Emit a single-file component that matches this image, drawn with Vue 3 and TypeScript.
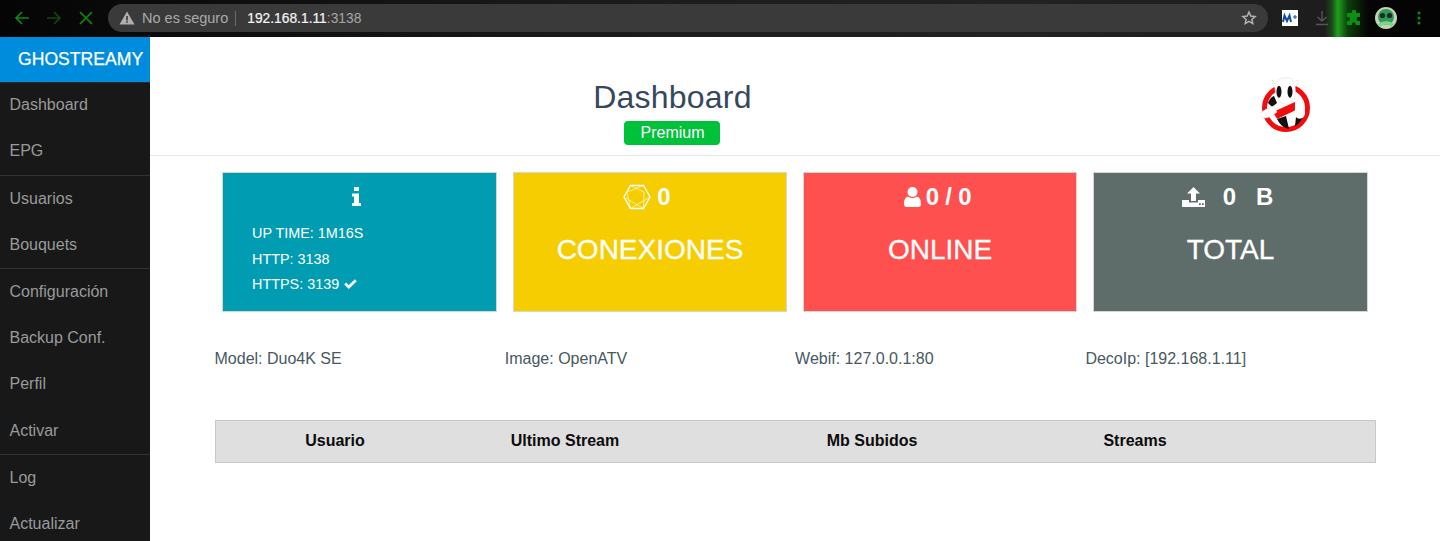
<script setup lang="ts">
const navGroups: string[][] = [
  ['Dashboard', 'EPG'],
  ['Usuarios', 'Bouquets'],
  ['Configuración', 'Backup Conf.', 'Perfil', 'Activar'],
  ['Log', 'Actualizar'],
]
const info: string[] = ['Model: Duo4K SE', 'Image: OpenATV', 'Webif: 127.0.0.1:80', 'DecoIp: [192.168.1.11]']
</script>

<template>
  <div class="page">
    <header class="chrome">
      <div class="nav-icons">
        <svg width="18" height="18" viewBox="0 0 18 18" class="ic-green"><path d="M16 9H3M9 3 3 9l6 6" fill="none" stroke="currentColor" stroke-width="1.7"/></svg>
        <svg width="18" height="18" viewBox="0 0 18 18" class="ic-dim"><path d="M2 9h13M9 3l6 6-6 6" fill="none" stroke="currentColor" stroke-width="1.7"/></svg>
        <svg width="18" height="18" viewBox="0 0 18 18" class="ic-green"><path d="M3 3l12 12M15 3 3 15" fill="none" stroke="currentColor" stroke-width="1.7"/></svg>
      </div>
      <div class="omnibox">
        <svg width="16" height="14" viewBox="0 0 16 14" class="warn"><path d="M8 0.5 15.5 13.5H.5Z" fill="#b0b0b0"/><path d="M7.2 5h1.6v4.4H7.2zM7.2 10.2h1.6v1.6H7.2z" fill="#3a3a3a"/></svg>
        <span class="insecure">No es seguro</span>
        <span class="sep"></span>
        <span class="url"><b>192.168.1.11</b><i>:3138</i></span>
        <svg class="star" width="16" height="16" viewBox="0 0 24 24"><path d="M12 3.2l2.7 5.9 6.4.7-4.8 4.3 1.4 6.3-5.7-3.3-5.7 3.3 1.4-6.3-4.8-4.3 6.4-.7z" fill="none" stroke="#b4b4b4" stroke-width="2.2"/></svg>
      </div>
      <div class="ext">
        <div class="movistar"><svg width="16" height="10" viewBox="0 0 16 10"><path d="M1 9 2.5 2.5 5 8 7.5 2.5 9 9" fill="none" stroke="#0b4f9e" stroke-width="2"/><path d="M11 4h4M13 2v4" stroke="#0b4f9e" stroke-width="1"/></svg></div>
        <svg class="dl" width="16" height="16" viewBox="0 0 16 16"><path d="M8 1v10M3.5 7 8 11l4.500-4M2 14.500h12" fill="none" stroke="#555" stroke-width="1.4"/></svg>
        <svg class="puzzle" width="16" height="16" viewBox="0 0 16 16"><path d="M6 1.500a2 2 0 0 1 4 0V3h4v4h-1.500a2 2 0 0 0 0 4H14v4H9.500v-1a1.800 1.800 0 0 0-3.600 0v1H1v-4h1a2 2 0 0 0 0-4H1V3h5z" fill="#0c8f12"/></svg>
        <svg class="avatar" width="22" height="22" viewBox="0 0 22 22"><circle cx="11" cy="11" r="11" fill="#c9d0b8"/><circle cx="11" cy="10" r="8" fill="#2f9a57"/><circle cx="7.500" cy="8.500" r="2.600" fill="#1c2a20"/><circle cx="14.500" cy="8.500" r="2.600" fill="#1c2a20"/><path d="M4 19c3-4 11-4 14 0" stroke="#7bd685" stroke-width="3.500" fill="none"/></svg>
        <svg class="dots" width="4" height="14" viewBox="0 0 4 14"><circle cx="2" cy="2" r="1.500" fill="#0b8f10"/><circle cx="2" cy="7" r="1.500" fill="#0b8f10"/><circle cx="2" cy="12" r="1.500" fill="#0b8f10"/></svg>
      </div>
    </header>

    <div class="body">
      <aside class="sidebar">
        <div class="brand">GHOSTREAMY</div>
        <nav v-for="(group, g) in navGroups" :key="g" class="group">
          <a v-for="item in group" :key="item" class="nav-item">{{ item }}</a>
        </nav>
      </aside>

      <main class="main">
        <section class="head">
          <div class="head-title">
            <h1>Dashboard</h1>
            <span class="badge">Premium</span>
          </div>
          <div class="head-logo">
            <svg width="52" height="58" viewBox="0 0 52 58">
              <circle cx="26" cy="33" r="21.500" fill="#fff" stroke="#f10d0d" stroke-width="5"/>
              <path d="M8 28c1-3 3-6 6-7l3 7-5 4zM17 44l9-3 3 13c-5-1-9-4-12-10zM36 42l7-1c-1 4-4 8-8 10z" fill="#111"/>
              <path d="M12 5c1 1 2 3 3 4 2-4 8-7 13-6 3 0 5 2 6 4 1-1 3-2 4-2 0 3-1 5-3 7 1 6 0 12-2 15-3 3-9 3-12 0-4-4-6-9-6-14-2-2-3-5-3-8z" fill="#fff" stroke="#dcdcdc" stroke-width=".6"/>
              <ellipse cx="19" cy="16.700" rx="2.500" ry="6" fill="#111"/>
              <ellipse cx="30" cy="16.700" rx="2.500" ry="6" fill="#111"/>
              <path d="M13 37l22-10 1 8-19 9z" fill="#f10d0d"/>
              <path d="M35 25c6 3 10 8 10 13 0 4-4 7-8 5-3-2-2-8-2-11z" fill="#fff"/>
              <path d="M0 38c5-3 9-6 14-7l3 6c-4 3-8 6-12 6-4 0-6-3-5-5z" fill="#fff" stroke="#ddd" stroke-width=".6"/>
            </svg>
          </div>
        </section>

        <section class="cards">
          <article class="card teal">
            <svg class="i-info" width="9" height="19" viewBox="0 0 9 19"><path d="M2 0h5v4H2zM0 6.500h7V16h2v3H0v-3h2v-6.500H0z" fill="#fff"/></svg>
            <ul class="uptime">
              <li>UP TIME: 1M16S</li>
              <li>HTTP: 3138</li>
              <li>HTTPS: 3139
                <svg width="13" height="10" viewBox="0 0 13 10"><path d="M1.200 4.500 4.800 8 11.800 1.200" fill="none" stroke="#fff" stroke-width="2.800"/></svg>
              </li>
            </ul>
          </article>

          <article class="card yellow">
            <div class="stat shift-3">
              <svg width="28" height="26" viewBox="0 0 28 26" fill="none" stroke="#fff">
                <path d="M1 13 7.500 1.500h13L27 13l-6.500 11.500h-13z" stroke-width="1.300"/>
                <path d="M7.500 1.500 21 8 20.500 24.500M20.500 1.500 4 8l3.500 16.500M1 13l19.500 11.500M27 13 7.500 24.500" stroke-width=".6"/>
              </svg>
              <span>0</span>
            </div>
            <div class="label">CONEXIONES</div>
          </article>

          <article class="card red">
            <div class="stat tight">
              <svg width="17" height="20" viewBox="0 0 17 20"><circle cx="8.500" cy="5" r="5" fill="#fff"/><path d="M0 17c0-5 2-7 4-7.500 3 2 6 2 9 0 2 .5 4 2.500 4 7.500 0 2-1 3-3 3H3c-2 0-3-1-3-3z" fill="#fff"/></svg>
              <span>0 / 0</span>
            </div>
            <div class="label">ONLINE</div>
          </article>

          <article class="card slate">
            <div class="stat wide">
              <svg width="23" height="20" viewBox="0 0 23 20"><path d="M11.500 0 18 6.500h-4V14H9V6.500H5zM0 13h7v2.500h9V13h7v7H0z" fill="#fff"/><path d="M17 16.200h1.800V18H17zM20 16.200h1.800V18H20z" fill="#5f6d6a"/></svg>
              <span>0</span>
              <span class="unit">B</span>
            </div>
            <div class="label">TOTAL</div>
          </article>
        </section>

        <section class="info">
          <div v-for="text in info" :key="text" class="info-cell">{{ text }}</div>
        </section>

        <section class="table-head">
          <span>Usuario</span>
          <span>Ultimo Stream</span>
          <span>Mb Subidos</span>
          <span>Streams</span>
        </section>
      </main>
    </div>
  </div>
</template>

<style>
html, body { margin: 0; background: #fff; }
</style>

<style scoped>
.page {
  width: 1440px;
  height: 541px;
  overflow: hidden;
  display: flex;
  flex-direction: column;
  font-family: "Liberation Sans", Arial, sans-serif;
}
.chrome {
  height: 37px;
  flex: none;
  display: flex;
  align-items: center;
  background: linear-gradient(90deg, #050505 0, #1a1a1a 40%, #222 70%, #1d1d1d 92%, #1a4a1a 92.500%, #1fa01f 92.900%, #0c3f0c 93.600%, #050505 95%, #040404 100%);
  box-sizing: border-box;
  padding-bottom: 1px;
}
.nav-icons {
  width: 108px;
  flex: none;
  box-sizing: border-box;
  padding-left: 13px;
  display: flex;
  gap: 14px;
  align-items: center;
}
.ic-green { color: #0d8a10; }
.ic-dim { color: #0c4a0d; }
.omnibox {
  width: 1160px;
  height: 28px;
  flex: none;
  background: #3a3a3a;
  border-radius: 14px;
  display: flex;
  align-items: center;
  box-sizing: border-box;
  padding: 0 11px;
  color: #aaa;
}
.insecure { margin-left: 7px; font-size: 14.500px; white-space: nowrap; }
.sep { width: 1px; height: 15px; background: #6a6a6a; margin: 0 11px 0 7px; flex: none; }
.url { font-size: 13.800px; white-space: nowrap; }
.url b { font-weight: 400; color: #f5f5f5; -webkit-text-stroke: .2px #f5f5f5; }
.url i { font-style: normal; color: #a8a8a8; }
.star { margin-left: auto; }
.ext {
  flex: 1;
  display: flex;
  align-items: center;
  padding-left: 14px;
}
.movistar {
  width: 16px;
  height: 16px;
  background: #fff;
  display: flex;
  align-items: center;
  justify-content: center;
}
.dl { margin-left: 16px; }
.puzzle { margin-left: 16px; }
.avatar { margin-left: 13px; }
.dots { margin-left: 20px; }

.body { flex: 1; display: flex; min-height: 0; }
.sidebar {
  width: 150px;
  flex: none;
  background: #181818;
}
.brand {
  height: 45px;
  background: #008cdd;
  color: #fff;
  font-size: 17.600px;
  line-height: 45px;
  padding-left: 18px;
  white-space: nowrap;
  -webkit-text-stroke: .25px #fff;
}
.group { border-top: 1px solid #333; display: block; }
.group:first-of-type { border-top-color: #2c2c2c; }
.nav-item {
  display: block;
  height: 46px;
  line-height: 44px;
  padding-left: 9.500px;
  font-size: 16px;
  color: #9a9a9a;
  white-space: nowrap;
}
.group + .group .nav-item { line-height: 46px; }
.group:nth-of-type(3) .nav-item:last-child { margin-top: 1px; }

.main { flex: 1; min-width: 0; }
.head {
  height: 119px;
  box-sizing: border-box;
  border-bottom: 1px solid #e8e8e8;
  display: grid;
  grid-template-columns: 1045px 182px;
}
.head-title {
  display: flex;
  flex-direction: column;
  align-items: center;
  padding-top: 41px;
}
h1 {
  margin: 0;
  font-size: 32px;
  font-weight: 400;
  line-height: 39px;
  color: #35495e;
  letter-spacing: .2px;
}
.badge {
  margin-top: 4px;
  margin-right: 2px;
  width: 96px;
  height: 24px;
  box-sizing: border-box;
  padding-left: 2px;
  line-height: 23px;
  text-align: center;
  background: #00c13a;
  color: #fff;
  font-size: 16px;
  border-radius: 4px;
}
.head-logo {
  display: flex;
  justify-content: center;
  padding-top: 38px;
}
.cards {
  display: grid;
  grid-template-columns: 275px 274px 274px 275px;
  column-gap: 16px;
  padding: 16px 0 0 72px;
}
.card {
  height: 139.500px;
  box-sizing: border-box;
  border: 1px solid #d6d6d6;
  color: #fff;
  display: flex;
  flex-direction: column;
  align-items: center;
}
.teal { background: #009db2; align-items: stretch; }
.yellow { background: #f6cd00; }
.red { background: #ff5050; }
.slate { background: #5f6d6a; }
.i-info { display: block; margin: 14px 0 0 129px; }
.uptime {
  list-style: none;
  margin: 15px 0 0;
  padding: 0 0 0 29px;
  font-size: 14.400px;
  line-height: 25.500px;
}
.uptime svg { vertical-align: 0; margin-left: 1px; }
.stat {
  display: flex;
  align-items: center;
  justify-content: center;
  gap: 6px;
  height: 26px;
  margin-top: 11px;
  font-size: 24px;
  font-weight: 700;
}
.shift-3 { margin-right: 6px; }
.stat.tight { gap: 5px; margin-right: 5px; letter-spacing: -.2px; }
.stat.wide { gap: 18px; margin-right: 6px; }
.unit { font-size: 24px; margin-left: 2px; }
.label {
  margin-top: 23px;
  font-size: 28px;
  line-height: 34px;
  -webkit-text-stroke: .3px #fff;
}
.info {
  display: grid;
  grid-template-columns: repeat(4, 290.300px);
  padding: 37.500px 0 0 64.500px;
  font-size: 16px;
  line-height: 20px;
  color: #47585f;
}
.table-head {
  margin: 51px 0 0 65px;
  width: 1161px;
  height: 43px;
  box-sizing: border-box;
  background: #dfdfdf;
  border: 1px solid #c8c8c8;
  display: grid;
  grid-template-columns: 236px 224px 390px 136px 1fr;
  align-items: center;
  justify-items: center;
  padding: 0 0 2px 1px;
  color: #0c0c0c;
  font-weight: 700;
  font-size: 16px;
}
</style>
